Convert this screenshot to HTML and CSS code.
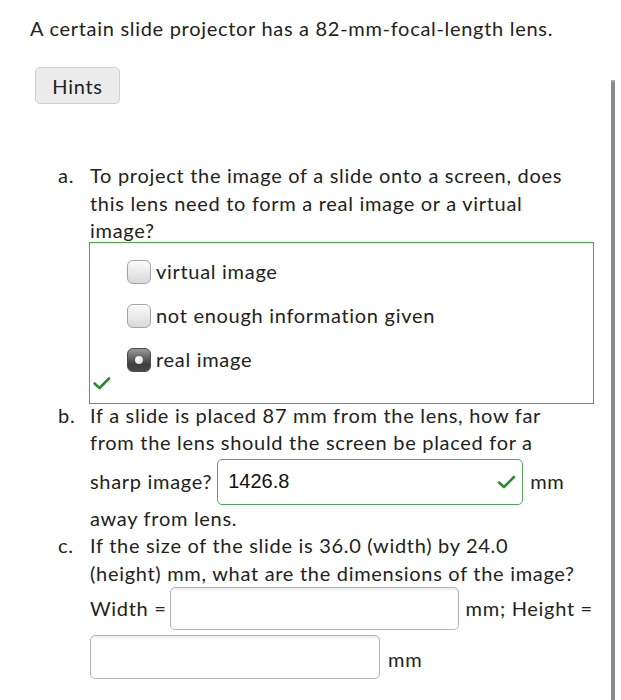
FILE: index.html
```html
<!DOCTYPE html>
<html>
<head>
<meta charset="utf-8">
<link rel="stylesheet" href="styles.css">
</head>
<body>
<div class="page">
  <div class="content">
    <p class="title">A certain slide projector has a 82-mm-focal-length lens.</p>
    <button class="hints">Hints</button>
    <div class="questions">
      <div class="item">
        <span class="marker">a.</span>
        <div class="body">
          <div class="q">To project the image of a slide onto a screen, does this lens need to form a real image or a virtual image?</div>
          <div class="choices">
            <label class="choice"><span class="cb"></span><span>virtual image</span></label>
            <label class="choice"><span class="cb"></span><span>not enough information given</span></label>
            <label class="choice"><span class="cb checked"></span><span>real image</span></label>
            <div class="feedback">
              <svg width="20" height="18" viewBox="0 0 20 18"><polyline points="2.5,9.5 7.5,14 17,4.5" fill="none" stroke="#2f8a2f" stroke-width="2.6" stroke-linecap="round" stroke-linejoin="round"/></svg>
            </div>
          </div>
        </div>
      </div>
      <div class="item item-b">
        <span class="marker">b.</span>
        <div class="body">
          <div class="q">If a slide is placed 87 mm from the lens, how far from the lens should the screen be placed for a</div>
          <div class="answer-row row-b">
            <span>sharp image?</span>
            <div class="field correct">
              <input class="value" type="text" value="1426.8">
              <svg width="22" height="18" viewBox="0 0 22 18"><polyline points="3,9.5 8,14 18,4" fill="none" stroke="#2f8a2f" stroke-width="2.6" stroke-linecap="round" stroke-linejoin="round"/></svg>
            </div>
            <span class="unit-b">mm</span>
          </div>
          <div class="q">away from lens.</div>
        </div>
      </div>
      <div class="item">
        <span class="marker">c.</span>
        <div class="body">
          <div class="q">If the size of the slide is 36.0 (width) by 24.0 (height) mm, what are the dimensions of the image?</div>
          <div class="answer-row row-c1">
            <span>Width =</span>
            <div class="field"><input class="value" type="text"></div>
            <span class="unit-c1">mm; Height =</span>
          </div>
          <div class="answer-row row-c2">
            <div class="field"><input class="value" type="text"></div>
            <span class="unit-low">mm</span>
          </div>
        </div>
      </div>
    </div>
  </div>
  <div class="scrollbar"></div>
</div>
</body>
</html>
```

FILE: styles.css
```css
html, body {
  margin: 0;
  padding: 0;
  background: #ffffff;
}

body {
  font-family: Lato, "Noto Sans", sans-serif;
  font-size: 20px;
  letter-spacing: 0.7px;
  color: #222222;
}

.page {
  display: flex;
  min-height: 700px;
}

.content {
  width: 552px;
  padding-left: 30px;
}

.scrollbar {
  width: 4px;
  margin-top: 80px;
  margin-left: 29px;
  background: #8c8c8c;
  border-top: 2px solid #a8a8a8;
}

.title {
  margin: 0;
  padding-top: 14px;
  line-height: 28px;
  white-space: nowrap;
}

.hints {
  display: block;
  margin: 25px 0 0 5px;
  width: 85px;
  height: 37px;
  padding: 0;
  font-family: Lato, "Noto Sans", sans-serif;
  font-size: 20px;
  letter-spacing: 0.7px;
  color: #222222;
  background: #ececec;
  border: 1px solid #cfcfcf;
  border-radius: 5px;
}

.questions {
  margin-top: 58px;
}

.item {
  display: grid;
  grid-template-columns: 32px minmax(0, 1fr);
  padding-left: 28px;
  line-height: 27px;
}

.marker {
  line-height: 27px;
}

.q {
  line-height: 27.5px;
}

.choices {
  margin: -3px 0 0 -1px;
  width: 503px;
  border: 1px solid #45a845;
  padding: 9px 0 11px 0;
}

.choice {
  display: flex;
  align-items: center;
  gap: 5px;
  height: 40px;
  margin-bottom: 4px;
  padding-left: 37px;
}

.cb {
  display: block;
  position: relative;
  width: 22px;
  height: 22px;
  border: 1px solid #a3a3a3;
  border-radius: 6px;
  background: linear-gradient(#fbfbfb, #d9d9d9);
  box-shadow: inset 0 1px 0 #ffffff;
}

.cb.checked {
  border-color: #4a4a4a;
  background: linear-gradient(#9a9a9a, #3c3c3c 70%, #4a4a4a);
  box-shadow: none;
}

.cb.checked::after {
  content: "";
  position: absolute;
  left: 7px;
  top: 7px;
  width: 8px;
  height: 8px;
  border-radius: 50%;
  background: radial-gradient(circle at 40% 35%, #ffffff, #cfcfcf);
}

.feedback {
  height: 18px;
  margin-top: -10px;
  padding-left: 2px;
}

.feedback svg {
  display: block;
}

.item-b {
  margin-top: -2px;
}

.answer-row {
  display: flex;
  align-items: center;
  gap: 5px;
}

.row-b {
  padding-top: 2px;
}

.unit-b {
  margin-left: 2px;
}

.field {
  display: flex;
  align-items: center;
  box-sizing: border-box;
  border: 1px solid #b5b5b5;
  border-radius: 5px;
  box-shadow: inset 0 2px 2px rgba(0, 0, 0, 0.08);
  background: #ffffff;
}

.field .value {
  flex: 1;
  min-width: 0;
  border: none;
  outline: none;
  background: transparent;
  padding: 0 0 0 10px;
  font-family: "Liberation Sans", Arial, sans-serif;
  font-size: 20px;
  letter-spacing: 0;
  color: #111111;
  height: 100%;
}

.field.correct {
  flex: none;
  width: 306px;
  height: 46px;
  border-color: #56a556;
  box-shadow: none;
}

.field.correct svg {
  margin-right: 4px;
}

.row-c1 {
  margin-top: 0;
  gap: 3px;
  white-space: nowrap;
}

.unit-c1 {
  margin-left: 4px;
}

.row-c1 .field {
  flex: none;
  width: 289px;
  height: 43px;
}

.row-c2 {
  margin-top: 5px;
  gap: 8px;
}

.row-c2 .field {
  flex: none;
  width: 290px;
  height: 44px;
}

.unit-low {
  padding-top: 4px;
}
```
